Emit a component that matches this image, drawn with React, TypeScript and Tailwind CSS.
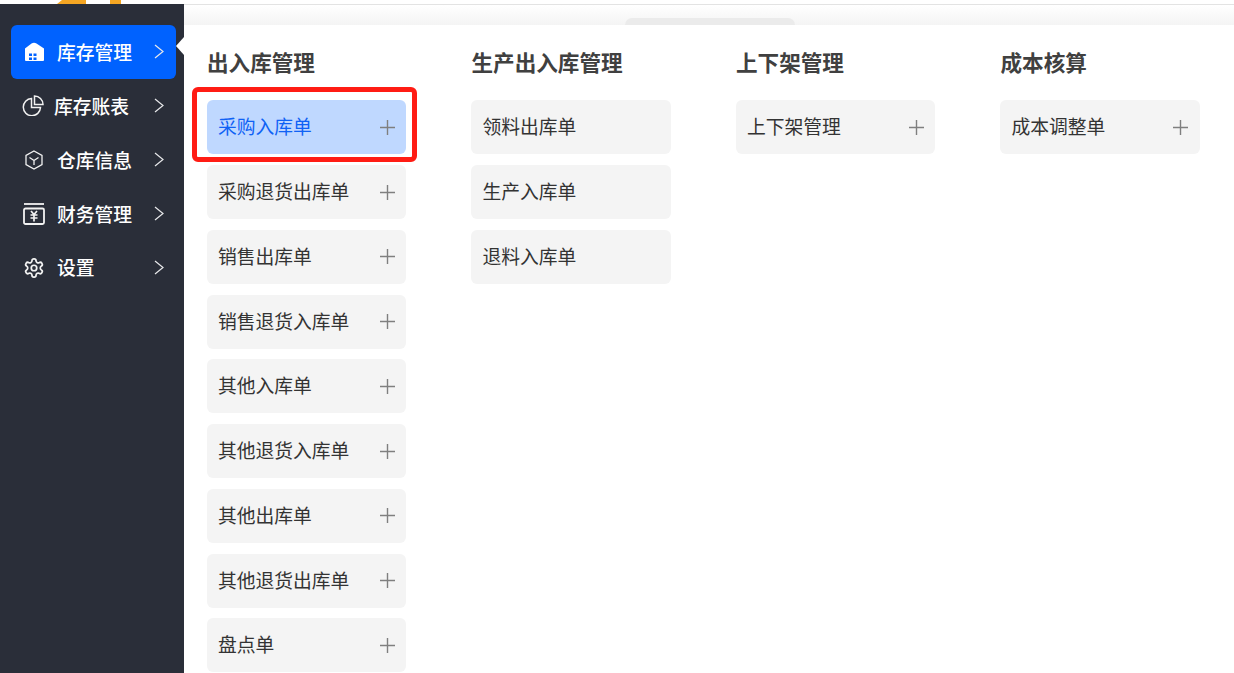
import { ReactNode } from "react";

const FONT = "font-['Noto_Sans_CJK_SC','Noto_Sans',sans-serif]";

interface Column {
  title: string;
  items: string[];
  noAdd?: boolean;
}

const columns: Column[] = [
  {
    title: "出入库管理",
    items: [
      "采购入库单",
      "采购退货出库单",
      "销售出库单",
      "销售退货入库单",
      "其他入库单",
      "其他退货入库单",
      "其他出库单",
      "其他退货出库单",
      "盘点单",
    ],
  },
  { title: "生产出入库管理", items: ["领料出库单", "生产入库单", "退料入库单"], noAdd: true },
  { title: "上下架管理", items: ["上下架管理"] },
  { title: "成本核算", items: ["成本调整单"] },
];

function HomeIcon() {
  return (
    <svg width="21" height="20" viewBox="0 0 21 20">
      <path
        d="M1 6.500 7.500 1.500Q10 0 12.500 1.500L20 6.500V18a1 1 0 0 1-1 1H2a1 1 0 0 1-1-1z"
        fill="#fff"
      />
      <path d="M5 11.500h3v2.500H5zM9.500 11.500h3v2.500h-3zM5 15.500h3V18H5zM9.500 15.500h3V18h-3z" fill="#0062ff" />
    </svg>
  );
}

function PieIcon() {
  return (
    <svg width="22" height="21" viewBox="0 0 22 21" fill="none" stroke="#f2f2f2" strokeWidth="1.500">
      <path d="M9.500 3.500A8.600 8.600 0 1 0 18.500 12.500H9.500z" />
      <path d="M12.500 1a8.500 8.500 0 0 1 8.500 8.500h-8.500z" />
    </svg>
  );
}

function BoxIcon() {
  return (
    <svg width="18" height="20" viewBox="0 0 18 20" fill="none" stroke="#f2f2f2" strokeWidth="1.300">
      <path d="M9 1l8 4.500v9L9 19l-8-4.500v-9z" />
      <path d="M4.500 7.500 9 10.500l4.500-3M9 10.500V15" />
    </svg>
  );
}

function YenIcon() {
  return (
    <svg width="22" height="22" viewBox="0 0 22 22" fill="none" stroke="#f2f2f2">
      <path d="M1 1h20" strokeWidth="1.800" />
      <rect x="1" y="5.500" width="20" height="15.500" rx="1.500" strokeWidth="1.800" />
      <path d="M8 8l3 3.500L14 8M7.500 12h7M7.500 15h7M11 11.500V18.500" strokeWidth="1.700" />
    </svg>
  );
}

function GearIcon() {
  return (
    <svg width="22" height="22" viewBox="0 0 24 24" fill="none" stroke="#f2f2f2" strokeWidth="1.900">
      <path d="M12.220 2h-.44a2 2 0 0 0-2 2v.18a2 2 0 0 1-1 1.730l-.43.250a2 2 0 0 1-2 0l-.15-.08a2 2 0 0 0-2.730.730l-.22.380a2 2 0 0 0 .730 2.730l.15.100a2 2 0 0 1 1 1.720v.510a2 2 0 0 1-1 1.740l-.15.090a2 2 0 0 0-.730 2.730l.22.380a2 2 0 0 0 2.730.730l.15-.08a2 2 0 0 1 2 0l.43.250a2 2 0 0 1 1 1.730V20a2 2 0 0 0 2 2h.44a2 2 0 0 0 2-2v-.18a2 2 0 0 1 1-1.730l.43-.250a2 2 0 0 1 2 0l.15.080a2 2 0 0 0 2.730-.730l.22-.390a2 2 0 0 0-.730-2.730l-.15-.08a2 2 0 0 1-1-1.740v-.500a2 2 0 0 1 1-1.740l.15-.090a2 2 0 0 0 .730-2.730l-.22-.380a2 2 0 0 0-2.730-.730l-.15.080a2 2 0 0 1-2 0l-.43-.250a2 2 0 0 1-1-1.730V4a2 2 0 0 0-2-2z" />
      <circle cx="12" cy="12" r="3" />
    </svg>
  );
}

function Chevron() {
  return (
    <svg width="10" height="15" viewBox="0 0 10 15" fill="none" stroke="#e8e9eb" strokeWidth="1.200">
      <path d="M1 1l8 6.500-8 6.500" />
    </svg>
  );
}

function PlusIcon() {
  return (
    <svg width="15" height="15" viewBox="0 0 15 15" stroke="#7f7f7f" strokeWidth="1.400">
      <path d="M0 7.500h15M7.500 0v15" />
    </svg>
  );
}

interface NavItem {
  label: string;
  icon: ReactNode;
  active?: boolean;
  narrowIcon?: boolean;
}

const navItems: NavItem[] = [
  { label: "库存管理", icon: <HomeIcon />, active: true },
  { label: "库存账表", icon: <PieIcon />, narrowIcon: true },
  { label: "仓库信息", icon: <BoxIcon /> },
  { label: "财务管理", icon: <YenIcon /> },
  { label: "设置", icon: <GearIcon /> },
];

function NavRow({ item }: { item: NavItem }) {
  return (
    <div
      className={`flex h-[53.900px] items-center rounded-md pr-[12px] text-[18.800px] font-medium text-white ${
        item.active ? "bg-[#0062ff]" : ""
      }`}
    >
      <span className={`flex shrink-0 justify-center ${item.narrowIcon ? "w-[43px]" : "w-[46px]"}`}>
        {item.icon}
      </span>
      <span className="grow">{item.label}</span>
      <Chevron />
    </div>
  );
}

function MenuItem({
  label,
  highlighted,
  noAdd,
}: {
  label: string;
  highlighted: boolean;
  noAdd?: boolean;
}) {
  return (
    <div
      className={`relative flex h-[54px] items-center justify-between rounded-md pr-[11.500px] pl-[11px] text-[18.800px] ${
        highlighted ? "bg-[#bfd8ff] text-[#0f62f5]" : "bg-[#f4f4f4] text-[#333333]"
      }`}
    >
      <span className="mb-[2px]">{label}</span>
      {!noAdd && <PlusIcon />}
      {highlighted && (
        <div className="absolute -top-[13px] -right-[11px] -bottom-[8px] -left-[15px] rounded-[6px] border-[5px] border-[#ff1c14]" />
      )}
    </div>
  );
}

export default function App() {
  return (
    <div className={`flex h-[673px] w-[1234px] flex-col overflow-hidden bg-white ${FONT}`}>
      {/* sliver of the page header above the menu */}
      <div className="flex h-[4px] shrink-0 bg-white">
        <svg width="124" height="4" viewBox="0 0 124 4">
          <path d="M57 4 62 0h24v4zM110 0h11v4h-11z" fill="#f5a623" />
        </svg>
      </div>
      <div className="flex min-h-0 grow">
        <aside className="relative flex w-[184px] shrink-0 flex-col bg-[#2a2e39] pt-[21px] pr-[8px] pl-[11px]">
          {navItems.map((item) => (
            <NavRow key={item.label} item={item} />
          ))}
          <div className="absolute top-[33px] right-0 h-0 w-0 border-y-[9px] border-r-[8px] border-y-transparent border-r-white" />
        </aside>
        <div className="flex min-w-0 grow flex-col">
          <div className="flex h-[21px] shrink-0 justify-center border-t border-[#e3e3e3] bg-gradient-to-b from-white to-[#f4f4f4]">
            <div className="mt-[13px] ml-[2px] h-[7px] w-[170px] rounded-t-[10px] bg-[#ebebeb]" />
          </div>
          <main className="flex grow gap-[64.960px] bg-white pl-[22.940px]">
            {columns.map((column) => (
              <section key={column.title} className="w-[199.550px] shrink-0">
                <h2 className="flex h-[75.400px] items-center pb-[1px] text-[21.600px] font-semibold text-[#404040]">
                  {column.title}
                </h2>
                <div className="flex flex-col gap-[10.750px]">
                  {column.items.map((label) => (
                    <MenuItem
                      key={label}
                      label={label}
                      highlighted={label === "采购入库单"}
                      noAdd={column.noAdd}
                    />
                  ))}
                </div>
              </section>
            ))}
          </main>
        </div>
      </div>
    </div>
  );
}
